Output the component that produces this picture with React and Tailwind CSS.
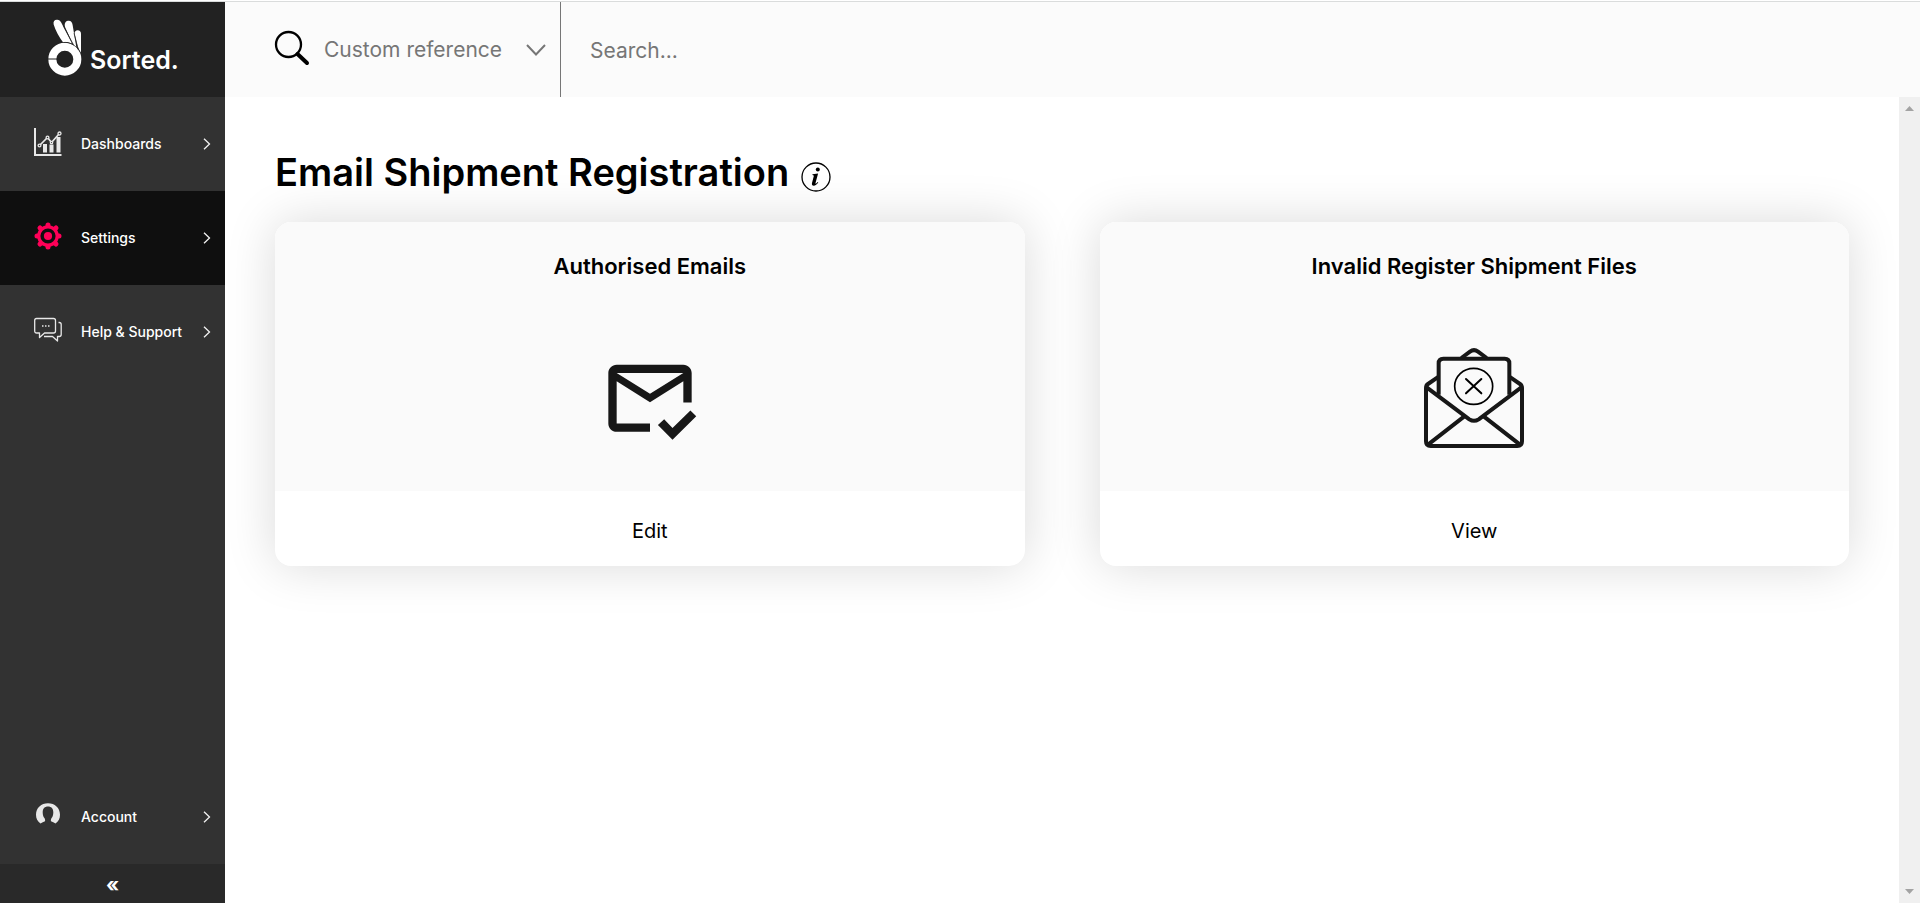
import React from "react";

function HandLogo() {
  return (
    <svg viewBox="144 58 102 170" className="h-[57px] w-[34px] shrink-0" aria-hidden="true">
      <circle cx="194.500" cy="178" r="37.500" fill="none" stroke="#fff" strokeWidth="24" />
      <path d="M143 177.500h28" stroke="#222" strokeWidth="3" />
      <path d="M189 127C178 112 166 92 161 74c-2-9 3-15 11-14 5 0 9 4 12 9l32 62c-8-4-17-6-27-4z" fill="#fff" />
      <path d="M217 129L196 84c-4-11-1-19 8-21 9-1 13 5 14 13l12 72z" fill="#fff" />
      <path d="M233 140l-9-38c-1-7 3-11 9-11s10 4 10 11v58z" fill="#fff" />
      <path d="M190 78l30 56M222 100l13 50M190 128c10-1 18 1 26 5 12 5 20 16 27 28" fill="none" stroke="#222" strokeWidth="2" />
    </svg>
  );
}

function DashboardIcon() {
  return (
    <svg viewBox="0 0 28 28" className="h-7 w-7" fill="none" stroke="#e8e8e8" aria-hidden="true">
      <path d="M1 0v27h26.500" strokeWidth="2" />
      <path d="M9 24.500v-8.500h4v8.500zM15.500 24.500v-8h4v8zM22.500 24.500V9h4v15.500z" fill="#e8e8e8" stroke="none" />
      <path d="M5.500 17.500l8-8 4 5 7.500-8.500" strokeWidth="1.700" />
      <g fill="#323232" strokeWidth="1.300">
        <circle cx="5.500" cy="17.500" r="1.400" />
        <circle cx="13.500" cy="9.500" r="1.400" />
        <circle cx="17.500" cy="14.500" r="1.200" />
        <circle cx="25.500" cy="5.500" r="1.500" />
      </g>
    </svg>
  );
}

function GearIcon() {
  return (
    <svg viewBox="-14 -14 28 28" className="h-7 w-7" aria-hidden="true">
      <g stroke="#ff0058" strokeWidth="5" strokeLinecap="round">
        <path d="M0-9v-2M0 9v2M-9 0h-2M9 0h2M6.500-6.500l1.500-1.500M6.500 6.500l1.500 1.500M-6.500 6.500l-1.500 1.500M-6.500-6.500l-1.500-1.500" />
      </g>
      <circle r="9.200" fill="#0f0f0f" stroke="#ff0058" strokeWidth="3.200" />
      <circle r="4.100" fill="#ff0058" />
    </svg>
  );
}

function ChatIcon() {
  return (
    <svg viewBox="0 0 28 28" className="h-7 w-7" fill="none" stroke="#e8e8e8" strokeWidth="1.300" strokeLinejoin="round" aria-hidden="true">
      <path d="M2.500 2.500h17q2 0 2 2v10.500q0 2-2 2H10.500L5.500 21.500V17H2.700q-2 0-2-2V4.500q0-2 1.800-2z" />
      <path d="M24.500 6.500h.7q2 0 2 2v10q0 2-2 2h-1.700v4.500l-5-4.500H10" />
      <path d="M8 10h1.500M11 10h1.500M14 10h1.500" strokeWidth="1.500" />
    </svg>
  );
}

function AccountIcon() {
  return (
    <svg viewBox="0 2 28 28" className="h-7 w-7" aria-hidden="true">
      <path
        d="M6.500 24.500C3.500 22.500 2 19.500 2 15.800 2 9 7.200 4.300 14 4.300S26 9 26 15.800c0 3.700-1.500 6.700-4.500 8.700-1.500-1-3-1.600-4.500-2.200-.3-1-.1-2 .6-3.200 1.200-1.600 1.700-3.600 1.700-5.900 0-3.600-2-5.700-5.300-5.700s-5.300 2.100-5.300 5.700c0 2.300.5 4.300 1.700 5.900.7 1.200.9 2.200.6 3.200-1.500.6-3 1.200-4.500 2.200z"
        fill="#e8e8e8"
      />
    </svg>
  );
}

function ChevronRight() {
  return (
    <svg viewBox="0 0 8 12" className="ml-auto h-3 w-2 shrink-0" fill="none" stroke="#f2f2f2" strokeWidth="1.300" aria-hidden="true">
      <path d="M1 0.700l5.500 5.300L1 11.300" />
    </svg>
  );
}

function NavItem({ icon, label, active }) {
  return (
    <a
      href="#"
      className={
        "flex h-[94px] shrink-0 items-center pr-3.5 pl-[34px] text-sm font-medium text-white " +
        (active ? "bg-[#0f0f0f]" : "")
      }
    >
      <span className="mr-[19px] pb-1">{icon}</span>
      <span className="whitespace-nowrap">{label}</span>
      <ChevronRight />
    </a>
  );
}

function EmailCheckIcon() {
  return (
    <svg viewBox="0 0 24 24" className="h-[100px] w-[100px]" fill="#171717" aria-hidden="true">
      <path d="M12 20.100H4c-1.100 0-2-.9-2-2V6c0-1.100.9-2 2-2h16c1.100 0 2 .9 2 2v7.100h-2V8l-8 5-8-5v10.100h8zM12 11l8-5H4z" />
      <path d="M13.900 18.500l1.500-1.400 2 2.100 4.300-4.200 1.400 1.400-5.700 5.600z" />
    </svg>
  );
}

function EmailErrorIcon() {
  return (
    <svg viewBox="72 54 300 300" className="h-[100px] w-[100px]" fill="none" stroke="#171717" strokeWidth="12" strokeLinejoin="round" aria-hidden="true">
      <path d="M116 140L84 162q-6 4-6 12v160q0 14 14 14h260q14 0 14-14V174q0-8-6-12l-32-22" />
      <path d="M116 194V100q0-14 14-14h184q14 0 14 14v94" />
      <path d="M184 84l26-19q12-9 24 0l26 19" />
      <path d="M80 172l128 96q14 9 28 0l128-96" />
      <path d="M84 344l108-84M360 344l-108-84" />
      <ellipse cx="221" cy="169" rx="57" ry="54" stroke="#000" strokeWidth="5" />
      <path d="M198 147l46 43M244 147l-46 43" stroke="#000" strokeWidth="6" strokeLinecap="round" />
    </svg>
  );
}

function Card({ title, icon, action }) {
  return (
    <section className="overflow-hidden rounded-2xl bg-white text-center shadow-[0_0_50px_rgba(0,0,0,0.15)]">
      <div className="flex h-[269px] flex-col items-center bg-[#fafafa] pt-7">
        <h2 className="text-[22px] leading-8 font-semibold">{title}</h2>
        <div className="mt-[66px]">{icon}</div>
      </div>
      <button type="button" className="h-[75px] w-full pt-1 text-xl">
        {action}
      </button>
    </section>
  );
}

export default function App() {
  return (
    <div className="flex h-screen flex-col bg-white pt-px font-['Inter','Liberation_Sans',sans-serif] text-black">
      <div className="flex min-h-0 flex-1 border-t border-[#dadcdc]">
        <nav className="flex w-[225px] shrink-0 flex-col bg-[#323232]" aria-label="Main">
          <a href="#" className="flex h-[95px] shrink-0 items-center bg-[#222] pb-1 pl-12 text-white">
            <HandLogo />
            <span className="ml-2 pt-6 text-[25px] leading-8 font-semibold">Sorted.</span>
          </a>
          <NavItem icon={<DashboardIcon />} label="Dashboards" />
          <NavItem icon={<GearIcon />} label="Settings" active />
          <NavItem icon={<ChatIcon />} label="Help &amp; Support" />
          <div className="mt-auto">
            <NavItem icon={<AccountIcon />} label="Account" />
          </div>
          <button type="button" aria-label="Collapse menu" className="h-[39px] shrink-0 bg-[#292929] pt-0.5 text-xl leading-5 font-bold text-white">
            «
          </button>
        </nav>

        <div className="flex min-w-0 flex-1 flex-col">
          <header className="flex h-[95px] shrink-0 items-stretch bg-[#fbfbfb] text-[#767676]">
            <div className="flex w-[336px] shrink-0 items-center border-r border-[#767676] pr-3.5 pl-[49px]">
              <svg viewBox="0 0 36 36" className="mb-1 h-9 w-9 shrink-0" fill="none" stroke="#000" aria-hidden="true">
                <circle cx="14.500" cy="14.500" r="12.500" strokeWidth="2.300" />
                <path d="M23.500 24l9.500 9" strokeWidth="4" strokeLinecap="round" />
              </svg>
              <select aria-label="Search by" className="ml-3.5 h-full min-w-0 flex-1 appearance-none bg-transparent text-[21px] outline-none">
                <option>Custom reference</option>
              </select>
              <svg viewBox="0 0 20 12" className="h-3 w-5 shrink-0" fill="none" stroke="#767676" strokeWidth="2" aria-hidden="true">
                <path d="M1 1l9 9.500L19 1" />
              </svg>
            </div>
            <input
              aria-label="Search"
              type="search"
              placeholder="Search..."
              className="min-w-0 flex-1 bg-transparent pt-0.5 pl-[29px] text-[21px] outline-none placeholder:text-[#767676]"
            />
          </header>

          <div className="flex min-h-0 flex-1">
            <main className="min-w-0 flex-1 overflow-hidden px-[50px] pt-[50px]">
              <div className="flex h-[75px] items-start gap-3">
                <h1 className="text-[38px] leading-[50px] font-semibold whitespace-nowrap">Email Shipment Registration</h1>
                <button type="button" aria-label="More information" className="mt-[15px]">
                  <svg viewBox="0 0 30 30" className="h-[30px] w-[30px]" aria-hidden="true">
                    <circle cx="15" cy="15" r="14" fill="none" stroke="#000" strokeWidth="1.300" />
                    <circle cx="16.800" cy="7.600" r="2" />
                    <path d="M11.500 12.300l5.600-.9-2.600 9.600c-.2.900.3.900 1 .3l1.200-1.300.6.500c-1.400 2-2.900 3.200-4.600 3.200-1.500 0-2.100-1-1.700-2.600l1.700-6.500c.3-1.100.1-1.500-1.300-1.600z" />
                  </svg>
                </button>
              </div>
              <div className="grid grid-cols-2 gap-[75px]">
                <Card title="Authorised Emails" icon={<EmailCheckIcon />} action="Edit" />
                <Card title="Invalid Register Shipment Files" icon={<EmailErrorIcon />} action="View" />
              </div>
            </main>
            <div className="flex w-[21px] shrink-0 flex-col items-center justify-between bg-[#f0f0f0] py-2" aria-hidden="true">
              <svg viewBox="0 0 9 6" className="h-1.5 w-[9px]" fill="#a3a3a3"><path d="M0 6L4.500 1 9 6z" /></svg>
              <svg viewBox="0 0 9 6" className="h-1.5 w-[9px]" fill="#a3a3a3"><path d="M0 0l4.500 5L9 0z" /></svg>
            </div>
          </div>
        </div>
      </div>
    </div>
  );
}
